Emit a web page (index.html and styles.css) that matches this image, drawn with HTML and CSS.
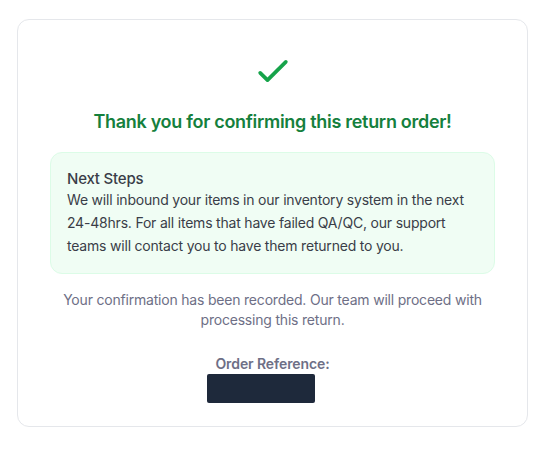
FILE: index.html
```html
<!DOCTYPE html>
<html lang="en">
<head>
<meta charset="utf-8">
<title>Return confirmed</title>
<link rel="stylesheet" href="styles.css">
</head>
<body>
<div class="card">
  <div class="icon">
    <svg width="44" height="44" viewBox="0 0 24 24" fill="none" stroke="currentColor" stroke-width="2" stroke-linecap="round" stroke-linejoin="round"><path d="M5 13l4 4L19 7"/></svg>
  </div>
  <h1 class="title">Thank you for confirming this return order!</h1>
  <div class="steps">
    <h2 class="steps-title">Next Steps</h2>
    <p class="steps-text">We will inbound your items in our inventory system in the next 24-48hrs. For all items that have failed QA/QC, our support teams will contact you to have them returned to you.</p>
  </div>
  <p class="note">Your confirmation has been recorded. Our team will proceed with processing this return.</p>
  <div class="ref">
    <div class="ref-label">Order Reference:</div>
    <div class="ref-value"></div>
  </div>
</div>
</body>
</html>
```
FILE: styles.css
```css
* { box-sizing: border-box; }
body {
  margin: 0;
  background: #ffffff;
  font-family: Inter, "Noto Sans", sans-serif;
}
.card {
  margin: 19px 11px 0 17px;
  border: 1px solid #e5e7eb;
  border-radius: 12px;
  padding: 29px 32px 23px;
  display: flex;
  flex-direction: column;
  align-items: stretch;
}
.icon {
  display: flex;
  justify-content: center;
  color: #16a34a;
}
.icon svg { display: block; }
.title {
  margin: 15px 0 0;
  text-align: center;
  font-size: 18px;
  line-height: 28px;
  font-weight: 600;
  letter-spacing: -0.3px;
  color: #15803d;
}
.steps {
  margin-top: 16px;
  background: #f0fdf4;
  border: 1px solid #dcfce7;
  border-radius: 12px;
  padding: 16px;
}
.steps-title {
  margin: 0;
  font-size: 15px;
  line-height: 20px;
  font-weight: 500;
  letter-spacing: -0.2px;
  color: #3a3d48;
}
.steps-text {
  margin: 0;
  font-size: 14px;
  line-height: 22.75px;
  letter-spacing: -0.2px;
  color: #3a3d48;
}
.note {
  margin: 16px 0 0;
  text-align: center;
  font-size: 14px;
  line-height: 20px;
  letter-spacing: -0.2px;
  color: #6e6f86;
}
.ref {
  margin-top: 24px;
  display: flex;
  flex-direction: column;
  align-items: center;
}
.ref-label {
  font-size: 14px;
  line-height: 20px;
  font-weight: 600;
  letter-spacing: -0.1px;
  color: #6e6f86;
}
.ref-value {
  width: 108px;
  height: 29px;
  margin-right: 24px;
  background: #1e293b;
  border-radius: 2px;
}
```
